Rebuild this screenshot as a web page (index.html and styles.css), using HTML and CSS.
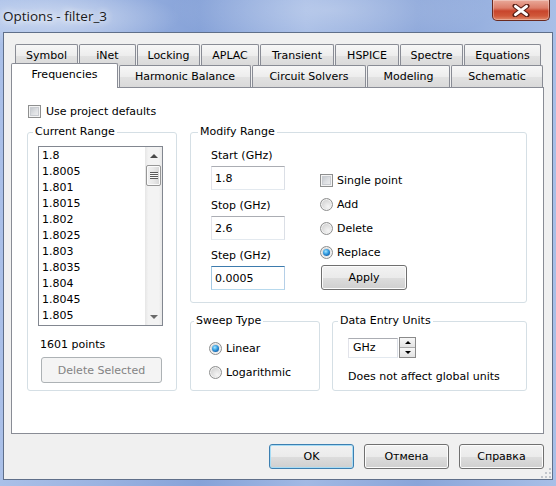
FILE: index.html
```html
<!DOCTYPE html>
<html>
<head>
<meta charset="utf-8">
<link rel="stylesheet" href="styles.css">
</head>
<body>
<div class="window">
  <div class="titlebar">
    <span class="title">Options - filter_3</span>
    <div class="close">
      <svg width="18" height="13" viewBox="0 0 18 13">
        <path d="M3 2 L15 11 M15 2 L3 11" stroke="#5a2118" stroke-width="5" stroke-linecap="round" fill="none"/>
        <path d="M3.5 2.4 L14.5 10.6 M14.5 2.4 L3.5 10.6" stroke="#ffffff" stroke-width="3" stroke-linecap="round" fill="none"/>
      </svg>
    </div>
  </div>
  <div class="client">
    <div class="tabrow row1">
      <div class="tab w-symbol">Symbol</div>
      <div class="tab w-inet">iNet</div>
      <div class="tab w-locking">Locking</div>
      <div class="tab w-aplac">APLAC</div>
      <div class="tab w-transient">Transient</div>
      <div class="tab w-hspice">HSPICE</div>
      <div class="tab w-spectre">Spectre</div>
      <div class="tab w-equations">Equations</div>
    </div>
    <div class="tabrow row2">
      <div class="tab active w-freq">Frequencies</div>
      <div class="tab w-harmonic">Harmonic Balance</div>
      <div class="tab w-circuit">Circuit Solvers</div>
      <div class="tab w-modeling">Modeling</div>
      <div class="tab w-schematic">Schematic</div>
    </div>
    <div class="panel">
      <div class="check-row"><span class="checkbox"></span><span>Use project defaults</span></div>
      <div class="panel-grid">
        <div class="group">
          <div class="group-title">Current Range</div>
          <div class="range-body">
            <div class="listbox">
              <ul class="items">
                <li>1.8</li>
                <li>1.8005</li>
                <li>1.801</li>
                <li>1.8015</li>
                <li>1.802</li>
                <li>1.8025</li>
                <li>1.803</li>
                <li>1.8035</li>
                <li>1.804</li>
                <li>1.8045</li>
                <li>1.805</li>
              </ul>
              <div class="scrollbar">
                <div class="sb-arrow"><span class="tri-up"></span></div>
                <div class="sb-track"><div class="sb-thumb"><span class="grip-lines"></span></div></div>
                <div class="sb-arrow"><span class="tri-down"></span></div>
              </div>
            </div>
            <div class="points">1601 points</div>
            <div class="btn disabled delete-btn">Delete Selected</div>
          </div>
        </div>
        <div class="right-col">
          <div class="group modify-group">
            <div class="group-title modify-title">Modify Range</div>
            <div class="modify-body">
              <div class="col-a">
                <div class="field-label first">Start (GHz)</div>
                <div class="input">1.8</div>
                <div class="field-label">Stop (GHz)</div>
                <div class="input">2.6</div>
                <div class="field-label">Step (GHz)</div>
                <div class="input focused">0.0005</div>
              </div>
              <div class="col-b">
                <div class="opt-row"><span class="checkbox"></span><span>Single point</span></div>
                <div class="opt-row"><span class="radio"></span><span>Add</span></div>
                <div class="opt-row"><span class="radio"></span><span>Delete</span></div>
                <div class="opt-row"><span class="radio checked"></span><span>Replace</span></div>
                <div class="btn apply-btn">Apply</div>
              </div>
            </div>
          </div>
          <div class="bottom-groups">
            <div class="group sweep-group">
              <div class="group-title sweep-title">Sweep Type</div>
              <div class="sweep-body">
                <div class="opt-row"><span class="radio checked"></span><span>Linear</span></div>
                <div class="opt-row"><span class="radio"></span><span>Logarithmic</span></div>
              </div>
            </div>
            <div class="group units-group">
              <div class="group-title">Data Entry Units</div>
              <div class="units-body">
                <div class="units-row">
                  <div class="input small">GHz</div>
                  <div class="spin">
                    <div class="spin-half"><span class="tri-up dark"></span></div>
                    <div class="spin-half"><span class="tri-down dark"></span></div>
                  </div>
                </div>
                <div class="units-note">Does not affect global units</div>
              </div>
            </div>
          </div>
        </div>
      </div>
    </div>
    <div class="footer">
      <div class="btn dlg default">OK</div>
      <div class="btn dlg">Отмена</div>
      <div class="btn dlg">Справка</div>
    </div>
    <svg class="grip" width="10" height="10" viewBox="0 0 10 10">
      <rect x="8" y="0" width="2" height="2" fill="#c2c6cc"/>
      <rect x="4" y="4" width="2" height="2" fill="#c2c6cc"/>
      <rect x="8" y="4" width="2" height="2" fill="#c2c6cc"/>
      <rect x="0" y="8" width="2" height="2" fill="#c2c6cc"/>
      <rect x="4" y="8" width="2" height="2" fill="#c2c6cc"/>
      <rect x="8" y="8" width="2" height="2" fill="#c2c6cc"/>
    </svg>
  </div>
</div>
</body>
</html>
```
FILE: styles.css
```css
html, body {
  margin: 0;
  padding: 0;
}
body {
  width: 556px;
  height: 486px;
  overflow: hidden;
  font-family: "DejaVu Sans", sans-serif;
  font-size: 11px;
  color: #000;
}
.window {
  width: 556px;
  height: 486px;
  display: flex;
  flex-direction: column;
  background:
    radial-gradient(ellipse 120px 30px at 60px 18px, rgba(255,255,255,0.45), rgba(255,255,255,0)),
    radial-gradient(ellipse 160px 40px at 330px 10px, rgba(255,255,255,0.25), rgba(255,255,255,0)),
    linear-gradient(to right, #aac0e8 0%, #9bb3e1 18%, #86a2d8 36%, #a2b9e4 55%, #8aa5d9 75%, #a8bfe7 100%);
}
.titlebar {
  height: 32px;
  flex: none;
  display: flex;
  align-items: flex-start;
}
.title {
  font-family: "Open Sans", "Noto Sans", sans-serif;
  font-size: 13.5px;
  line-height: 20px;
  margin: 6px 0 0 3px;
  color: #1a1a1a;
  text-shadow: 0 0 6px rgba(255,255,255,0.9), 0 0 10px rgba(255,255,255,0.8);
}
.close {
  margin-left: auto;
  margin-right: 6px;
  width: 58px;
  height: 21px;
  box-sizing: border-box;
  border: 1px solid #6a2a20;
  border-top: none;
  border-radius: 0 0 5px 5px;
  background: linear-gradient(#e9a99a 0%, #dc7d69 40%, #c8452c 55%, #d0583a 80%, #e08a6c 100%);
  box-shadow: inset 0 0 0 1px rgba(255,255,255,0.3);
  display: flex;
  align-items: center;
  justify-content: center;
}
.client {
  position: relative;
  box-sizing: border-box;
  width: 550px;
  height: 448px;
  margin-left: 3px;
  border: 1px solid #5f6f8a;
  background: #f0f0f0;
  padding: 11px 8px 10px 7px;
  flex: none;
}
.tabrow {
  display: flex;
  height: 22px;
  gap: 1px;
  position: relative;
}
.row1 {
  padding-left: 4px;
  z-index: 0;
}
.row2 {
  margin-top: -1px;
  z-index: 1;
}
.tab {
  box-sizing: border-box;
  height: 22px;
  flex: none;
  border: 1px solid #898c95;
  border-bottom: none;
  border-radius: 2px 2px 0 0;
  background: linear-gradient(#f7f7f7 0%, #ededed 50%, #e2e2e2 52%, #d9d9d9 100%);
  display: flex;
  align-items: center;
  justify-content: center;
  white-space: nowrap;
}
.tab.active {
  height: 25px;
  margin-top: -2px;
  padding-bottom: 3px;
  background: #fff;
  position: relative;
  z-index: 2;
}
.w-symbol { width: 63px; }
.w-inet { width: 57px; }
.w-locking { width: 63px; }
.w-aplac { width: 58px; }
.w-transient { width: 74px; }
.w-hspice { width: 64px; }
.w-spectre { width: 63px; }
.w-equations { width: 77px; }
.w-freq { width: 107px; }
.w-harmonic { width: 132px; }
.w-circuit { width: 114px; }
.w-modeling { width: 83px; }
.w-schematic { width: 92px; }

.panel {
  box-sizing: border-box;
  height: 347px;
  border: 1px solid #898c95;
  background: #fff;
  padding: 16px 0 0 15px;
  position: relative;
  z-index: 0;
}
.check-row {
  display: flex;
  align-items: center;
  height: 15px;
  gap: 5px;
  margin-left: 1px;
}
.checkbox {
  box-sizing: border-box;
  width: 13px;
  height: 13px;
  flex: none;
  border: 1px solid #8e8f8f;
  background: linear-gradient(135deg, #b9bec4 0%, #dfe1e4 55%, #f3f3f3 100%);
  box-shadow: inset 0 0 0 1px #f4f4f4, inset 0 0 0 2px #c9ccd1;
}
.radio {
  box-sizing: border-box;
  width: 13px;
  height: 13px;
  flex: none;
  border-radius: 50%;
  border: 1px solid #8e8f8f;
  background: radial-gradient(circle at 65% 70%, #f5f5f5 0%, #dcdcdc 55%, #c4c4c4 100%);
  box-shadow: inset 0 0 0 1px #f2f2f2;
  display: flex;
  align-items: center;
  justify-content: center;
}
.radio.checked::after {
  content: "";
  width: 7px;
  height: 7px;
  border-radius: 50%;
  background: radial-gradient(circle at 40% 35%, #a8e6ff 0%, #3aa2e4 40%, #0d5aa5 80%, #0b3f7a 100%);
}
.panel-grid {
  display: grid;
  grid-template-columns: 150px 337px;
  column-gap: 13px;
  margin-top: 13px;
  height: 259px;
}
.group {
  box-sizing: border-box;
  border: 1px solid #d5dfe5;
  border-radius: 3px;
}
.group-title {
  display: table;
  height: 14px;
  line-height: 14px;
  margin: -8px 0 0 5px;
  padding: 0 2px;
  background: #fff;
}
.modify-title {
  margin-left: 7px;
}
.sweep-title {
  margin-left: 3px;
}
.range-body {
  padding-left: 10px;
}
.listbox {
  box-sizing: border-box;
  width: 125px;
  height: 180px;
  margin-top: 7px;
  border: 1px solid #828790;
  display: flex;
}
.items {
  flex: 1;
  margin: 0;
  padding: 1px 0 0 3px;
  list-style: none;
  overflow: hidden;
}
.items li {
  line-height: 16px;
  height: 16px;
}
.scrollbar {
  width: 17px;
  flex: none;
  display: flex;
  flex-direction: column;
  background: linear-gradient(to right, #e6e6e6 0%, #f3f3f3 20%, #f3f3f3 80%, #e8e8e8 100%);
}
.sb-arrow {
  height: 17px;
  flex: none;
  display: flex;
  align-items: center;
  justify-content: center;
}
.sb-track {
  flex: 1;
  padding: 1px 1px 0 1px;
}
.sb-thumb {
  box-sizing: border-box;
  height: 21px;
  border: 1px solid #979797;
  border-radius: 2px;
  background: linear-gradient(to right, #f2f2f2 0%, #e8e8e8 50%, #d6d6d6 100%);
  box-shadow: inset 0 0 0 1px #fbfbfb;
  display: flex;
  align-items: center;
  justify-content: center;
}
.grip-lines {
  width: 8px;
  height: 7px;
  background: repeating-linear-gradient(to bottom, #5c5c5c 0 1px, #fafafa 1px 2px);
}
.tri-up {
  width: 0;
  height: 0;
  border-left: 4px solid transparent;
  border-right: 4px solid transparent;
  border-bottom: 4px solid #4a4a4a;
}
.tri-down {
  width: 0;
  height: 0;
  border-left: 4px solid transparent;
  border-right: 4px solid transparent;
  border-top: 4px solid #6a6a6a;
}
.tri-up.dark { border-bottom-color: #000; border-left-width: 3px; border-right-width: 3px; border-bottom-width: 3px; }
.tri-down.dark { border-top-color: #000; border-left-width: 3px; border-right-width: 3px; border-top-width: 3px; }
.points {
  margin: 12px 0 0 2px;
  line-height: 14px;
  height: 14px;
}
.btn {
  box-sizing: border-box;
  border: 1px solid #707070;
  border-radius: 3px;
  background: linear-gradient(#f2f2f2 0%, #ebebeb 50%, #dddddd 51%, #cfcfcf 100%);
  box-shadow: inset 0 0 0 1px #fcfcfc;
  display: flex;
  align-items: center;
  justify-content: center;
  white-space: nowrap;
}
.btn.disabled {
  border-color: #adb2b5;
  background: #f4f4f4;
  box-shadow: none;
  color: #838383;
}
.delete-btn {
  width: 121px;
  height: 26px;
  margin: 5px 0 0 3px;
}
.right-col {
  display: flex;
  flex-direction: column;
}
.modify-group {
  height: 171px;
}
.modify-body {
  display: flex;
  padding-left: 20px;
}
.col-a {
  width: 74px;
  flex: none;
}
.field-label {
  line-height: 14px;
  height: 14px;
  margin-top: 9px;
}
.field-label.first {
  margin-top: 10px;
}
.input {
  box-sizing: border-box;
  height: 24px;
  margin-top: 3px;
  border: 1px solid;
  border-color: #abadb3 #dbdfe6 #e3e9ef #e2e3ea;
  background: #fff;
  padding-left: 3px;
  display: flex;
  align-items: center;
}
.input.focused {
  border-color: #3d7bad #b5cfe7 #b7d9ed #a4c9e3;
}
.col-b {
  margin: 29px 0 0 35px;
}
.opt-row {
  height: 24px;
  display: flex;
  align-items: center;
  gap: 4px;
}
.apply-btn {
  width: 86px;
  height: 25px;
  margin: 1px 0 0 1px;
}
.bottom-groups {
  display: flex;
  gap: 12px;
  margin-top: 18px;
  height: 70px;
}
.sweep-group {
  width: 130px;
}
.sweep-body {
  margin-top: 8px;
  padding-left: 18px;
}
.units-group {
  width: 195px;
}
.units-body {
  padding-left: 15px;
}
.units-row {
  display: flex;
  align-items: center;
  gap: 1px;
  margin-top: 9px;
  height: 21px;
}
.input.small {
  width: 50px;
  height: 20px;
  margin-top: 0;
  padding-left: 4px;
}
.spin {
  box-sizing: border-box;
  width: 17px;
  height: 21px;
  border: 1px solid #8a8a8a;
  display: flex;
  flex-direction: column;
  background: #f3f3f3;
}
.spin-half {
  flex: 1;
  display: flex;
  align-items: center;
  justify-content: center;
  background: linear-gradient(#f7f7f7, #e3e3e3);
}
.spin-half + .spin-half {
  border-top: 1px solid #a9a9a9;
}
.units-note {
  margin-top: 12px;
  line-height: 14px;
}
.footer {
  display: flex;
  justify-content: flex-end;
  gap: 10px;
  margin-top: 10px;
}
.btn.dlg {
  width: 85px;
  height: 25px;
}
.btn.default {
  border-color: #3c7fb1;
  box-shadow: inset 0 0 0 1px #a7dcf5;
}
.grip {
  position: absolute;
  right: 1px;
  bottom: 1px;
}
```
